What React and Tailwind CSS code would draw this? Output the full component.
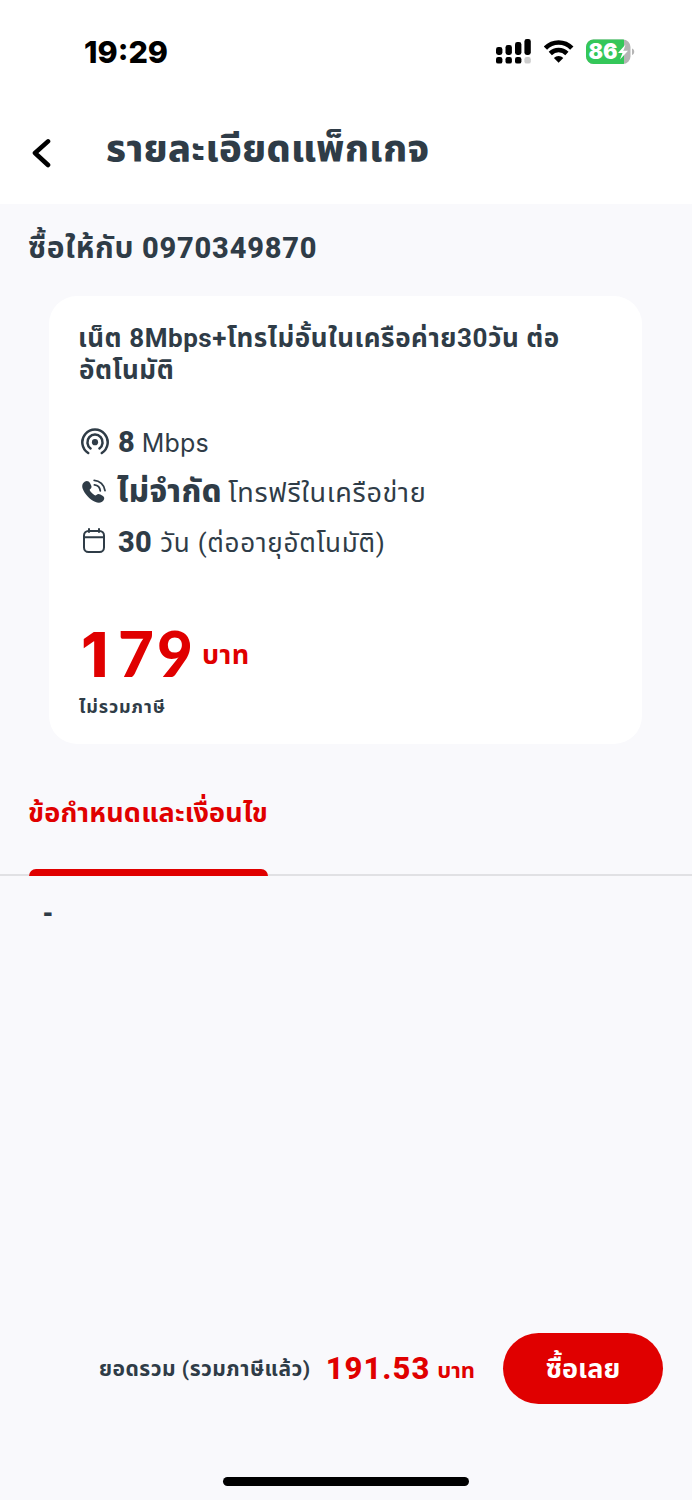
import React from "react";

function StatusBar() {
  return (
    <div className="flex h-[104px] items-center justify-between pl-[84px] pr-[57px]">
      <span className="font-['Inter'] text-[30.5px] font-extrabold leading-[40px] text-black">19:29</span>
      <div className="flex items-center">
        <svg width="36" height="26" viewBox="0 0 36 26" className="mr-[12px]">
          <rect x="0" y="8" width="6.4" height="8" rx="2.4" />
          <rect x="9.5" y="6" width="6.4" height="10" rx="2.4" />
          <rect x="19" y="3" width="6.4" height="13" rx="2.4" />
          <rect x="28.4" y="0" width="6.4" height="16" rx="2.4" />
          <rect x="0" y="18" width="6.4" height="6.6" rx="2.2" />
          <rect x="9.5" y="18" width="6.4" height="6.6" rx="2.2" />
          <rect x="19" y="18" width="6.4" height="6.6" rx="2.2" />
          <rect x="28.4" y="18" width="6.4" height="6.6" rx="2.2" fill="#cccccc" />
        </svg>
        <svg width="30" height="24" viewBox="0 0 30 24" className="mr-[12px]" fill="none" stroke="#000" strokeWidth="4.6">
          <path d="M1.4 8.2C8.600 .6 20.600 .6 27.800 8.200" />
          <path d="M6.300 13.500C11 8.900 18.200 8.900 22.900 13.500" />
          <path d="M14.600 22.800L9.900 18C12.400 15.300 16.800 15.300 19.300 18Z" fill="#000" stroke="none" />
        </svg>
        <svg width="49" height="26" viewBox="0 0 49 26">
          <defs>
            <clipPath id="battery"><rect x="0" y="0.500" width="44.500" height="24.500" rx="7.500" /></clipPath>
          </defs>
          <g clipPath="url(#battery)">
            <rect width="45" height="26" fill="#b5b5b5" />
            <rect width="38" height="26" fill="#34c759" />
          </g>
          <path d="M46 9.500C49 10.500 49 15 46 16Z" fill="#b5b5b5" />
          <text x="2.500" y="20.300" fill="#fff" fontFamily="Inter" fontSize="21.500" fontWeight="900" textLength="29">86</text>
          <path d="M39.500 5.500L32 14H36.500L34 20.500L42 11.800H37.500Z" fill="#fff" />
        </svg>
      </div>
    </div>
  );
}

function SignalIcon() {
  return (
    <svg width="28" height="28" viewBox="0 0 28 28" fill="none" stroke="#2f3c47" strokeWidth="2.500" strokeLinecap="round" className="relative left-px">
      <path d="M7.200 25A12.700 12.700 0 1 1 20.800 25" />
      <path d="M9.600 20.400A7.600 7.600 0 1 1 18.400 20.400" />
      <circle cx="14" cy="14.200" r="3.100" fill="#2f3c47" stroke="none" />
    </svg>
  );
}

function PhoneIcon() {
  return (
    <svg width="24" height="24" viewBox="0 0 24 24" fill="#2f3c47" className="mb-[3px]">
      <path d="M3 2.500C5 1.200 7 2.200 8.100 4.200L9.200 6.400C10 8.200 9.200 9.400 8 10.300C7.500 10.900 7.700 11.400 8.300 12.200C9.400 13.700 10.700 15 12.300 16C13.100 16.500 13.700 16.600 14.400 16C15.600 14.800 16.900 14.700 18.400 15.500L20.500 16.700C22.500 17.900 22.600 19.500 21.600 21.300C20 24 16.500 24.400 13 22.800C7.500 20.200 2.800 15.300.7 9.800C-.4 6.700.4 4.200 3 2.500Z" />
      <path d="M12.200 1.300C17.500 1.500 22.400 6 23 11.700M12.400 5.900C15.600 6.300 18 8.700 18.300 11.900" fill="none" stroke="#2f3c47" strokeWidth="1.800" strokeLinecap="round" />
    </svg>
  );
}

function CalendarIcon() {
  return (
    <svg width="22" height="25" viewBox="0 0 22 25" fill="none" stroke="#2f3c47" strokeWidth="2" strokeLinecap="round" className="mb-[3px]">
      <rect x="1" y="3" width="20" height="21" rx="4.500" />
      <path d="M1.500 9.300H20.500M6 1V4M16 1V4" />
    </svg>
  );
}

function Feature({ icon, children }) {
  return (
    <div className="flex h-[50px] items-center whitespace-nowrap">
      <div className="flex w-[38px] shrink-0 justify-center pr-[8px]">{icon}</div>
      <div className="flex items-baseline leading-[44px]">{children}</div>
    </div>
  );
}

export default function App() {
  return (
    <div className="flex h-[1500px] w-[692px] flex-col bg-[#f9f9fc] font-['Roboto','Noto_Sans_Thai','Noto_Sans',sans-serif] text-[#2f3c47]">
      <header className="h-[204px] shrink-0 bg-white">
        <StatusBar />
        <div className="flex h-[90px] items-center pl-[32px]">
          <svg width="19" height="30" viewBox="0 0 19 30" fill="none" stroke="#000" strokeWidth="4.600" strokeLinecap="round" strokeLinejoin="round" className="mt-[8px]">
            <path d="M16 3.400L3 15L16 27" />
          </svg>
          <h1 className="mb-[2px] ml-[55px] whitespace-nowrap text-[38px] font-extrabold leading-[50px] tracking-[0.35px]">รายละเอียดแพ็กเกจ</h1>
        </div>
      </header>
      <h2 className="mt-[24px] flex h-[40px] items-baseline whitespace-nowrap pl-[28px] text-[30px] font-bold leading-[40px] tracking-[0.6px]">
        ซื้อให้กับ<span className="ml-[8px] text-[29px] font-extrabold tracking-[0.8px]">0970349870</span>
      </h2>
      <section className="ml-[49px] mt-[28px] h-[448px] w-[593px] shrink-0 rounded-[28px] bg-white pl-[30px] pt-[26px]">
        <p className="h-[64px] whitespace-nowrap text-[26px] font-bold leading-[32px] tracking-[0.55px]"><span className="-ml-px">เน็ต 8Mbps+โทรไม่อั้นในเครือค่าย30วัน ต่อ</span><br />อัตโนมัติ</p>
        <div className="mt-[31px]">
          <Feature icon={<SignalIcon />}>
            <span className="ml-px text-[29px] font-extrabold">8</span>
            <span className="ml-[7px] font-['Inter'] text-[25px] tracking-[0.2px]">Mbps</span>
          </Feature>
          <Feature icon={<PhoneIcon />}>
            <span className="text-[31px] font-extrabold tracking-[0.6px]">ไม่จำกัด</span>
            <span className="ml-[6px] text-[27px] tracking-[0.7px]">โทรฟรีในเครือข่าย</span>
          </Feature>
          <Feature icon={<CalendarIcon />}>
            <span className="ml-px text-[29px] font-extrabold tracking-[0.4px]">30</span>
            <span className="ml-[8px] text-[26px] tracking-[0.75px]">วัน (ต่ออายุอัตโนมัติ)</span>
          </Feature>
        </div>
        <div className="mt-[46px] flex h-[80px] items-center text-[#e00000]">
          <div className="mt-[2px] flex w-[117px] items-baseline whitespace-nowrap pl-[2px] text-[62px] leading-[80px]">
            <span className="w-[37px] font-['Inter'] font-extrabold">1</span>
            <span className="font-['Lato'] font-black tracking-[3px]">79</span>
          </div>
          <span className="ml-[6px] mt-[5px] text-[27px] font-bold tracking-[0.5px]">บาท</span>
        </div>
        <p className="text-[18px] font-bold leading-[28px] tracking-[0.9px]">ไม่รวมภาษี</p>
      </section>
      <div className="mt-[49px] flex h-[83px] shrink-0 flex-col justify-between border-b-2 border-[#e1e1e4] pl-[29px]">
        <span className="-ml-px whitespace-nowrap text-[27px] font-bold leading-[40px] tracking-[0.2px] text-[#e00000]">ข้อกำหนดและเงื่อนไข</span>
        <div className="-mb-[2px] h-[7px] w-[239px] rounded-t-[7px] bg-[#e00000]" />
      </div>
      <div className="flex-1 pl-[43px] pt-[18px] font-['Liberation_Sans'] text-[29px] font-bold leading-[36px]">-</div>
      <footer className="flex h-[168px] shrink-0 items-start pl-[99px]">
        <div className="flex h-[71px] w-[404px] items-center whitespace-nowrap">
          <span className="mt-[2px] text-[21px] font-bold tracking-[0.5px]">ยอดรวม (รวมภาษีแล้ว)</span>
          <span className="ml-[15px] mt-[2px] text-[31px] font-extrabold tracking-[1px] text-[#e00000]">191.53</span>
          <span className="ml-[7px] mt-[3px] text-[22px] font-bold text-[#e00000]">บาท</span>
        </div>
        <button className="h-[71px] w-[160px] rounded-[36px] bg-[#e00000] pt-px text-[27px] font-bold text-white">ซื้อเลย</button>
      </footer>
      <div className="mb-[14px] ml-[223px] -mt-[24px] h-[9px] w-[246px] shrink-0 rounded-full bg-black" />
    </div>
  );
}
